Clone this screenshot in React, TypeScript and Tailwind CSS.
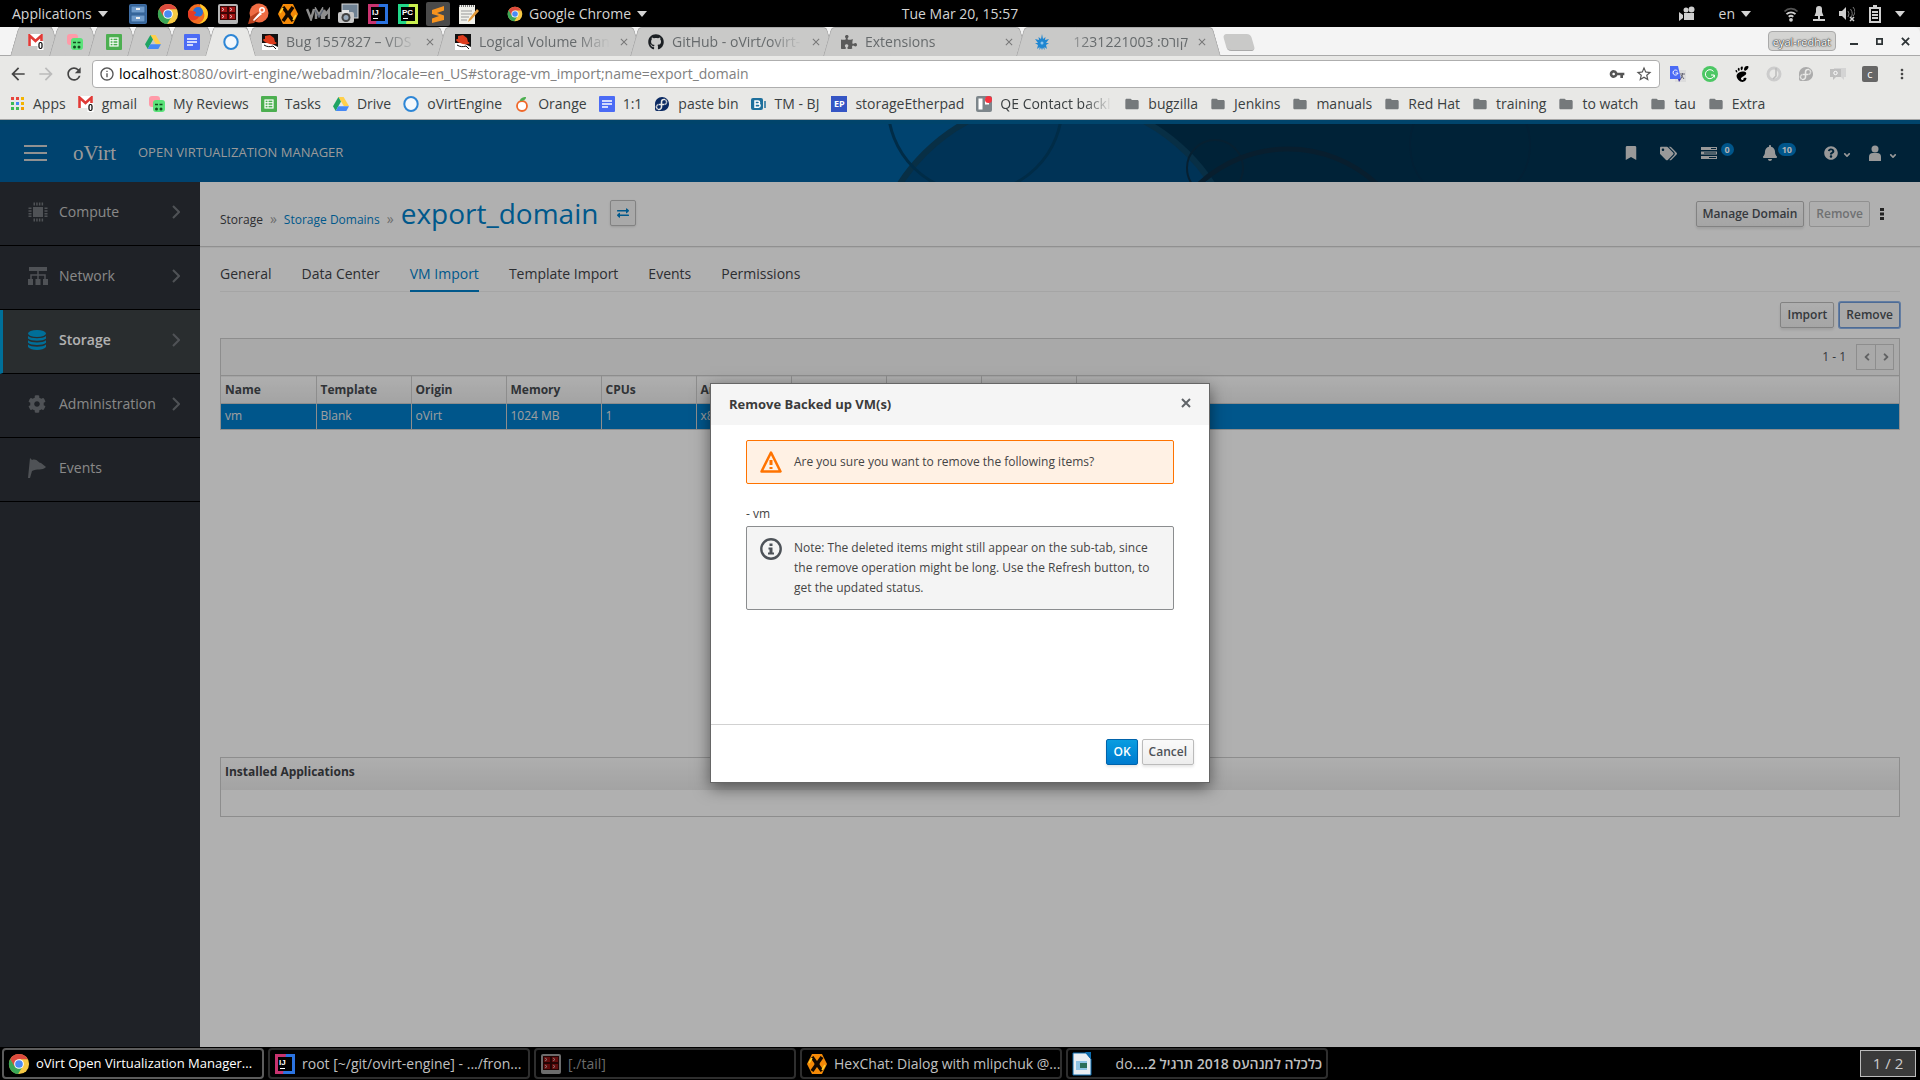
import type { ReactNode } from "react";
import {
  FaAngleDown,
  FaAngleLeft,
  FaAngleRight,
  FaBell,
  FaBookmark,
  FaCog,
  FaExchangeAlt,
  FaFedora,
  FaGithub,
  FaPuzzlePiece,
  FaQuestionCircle,
  FaTags,
} from "react-icons/fa";
import {
  MdArrowBack,
  MdArrowForward,
  MdClose,
  MdFolder,
  MdInfoOutline,
  MdMoreVert,
  MdRefresh,
  MdStarBorder,
  MdVpnKey,
} from "react-icons/md";
import { SiGnome } from "react-icons/si";

/* ---------- favicons and launcher icons ---------- */

function ChromeIcon({ className }: { className: string }) {
  return (
    <svg viewBox="0 0 24 24" className={className}>
      <circle cx="12" cy="12" r="11" fill="#f6c945" />
      <path d="M12 1a11 11 0 0 1 9.6 5.7H12L6.8 15 2.4 6.8A11 11 0 0 1 12 1z" fill="#dd4b3e" />
      <path d="M2.4 6.5A11 11 0 0 0 11 23l5-8.2L7.2 14.6z" fill="#3aa757" />
      <circle cx="12" cy="12" r="5.3" fill="#fff" />
      <circle cx="12" cy="12" r="4.2" fill="#4a8af4" />
    </svg>
  );
}

function FilesIcon() {
  return (
    <svg viewBox="0 0 20 22" className="h-[22px] w-5">
      <rect x="1" y="1" width="18" height="20" rx="2" fill="#3f6ea5" />
      <rect x="3" y="3" width="14" height="7" fill="#6f9bcb" stroke="#2f5c8f" />
      <rect x="3" y="12" width="14" height="7" fill="#6f9bcb" stroke="#2f5c8f" />
      <rect x="8" y="5" width="4" height="2" fill="#eee" />
      <rect x="8" y="14" width="4" height="2" fill="#eee" />
    </svg>
  );
}

function FirefoxIcon() {
  return (
    <svg viewBox="0 0 22 22" className="h-[22px] w-[22px]">
      <circle cx="11" cy="11" r="10" fill="#f36c21" />
      <path d="M13 1c4 2 8 5 8 10a10 10 0 0 1-10 10c6-3 8-8 5-13-1-2-3-4-3-7z" fill="#ffca28" />
      <circle cx="11" cy="9" r="5" fill="#2b6fd6" />
      <path d="M1 8c2-1 3 0 5 0s3 1 3 2-2 1-2 2 3 2 5 1c-1 4-5 5-8 4S1 12 1 8z" fill="#e63b25" />
    </svg>
  );
}

function TerminatorIcon({ className = "h-[22px] w-[22px]" }: { className?: string }) {
  return (
    <svg viewBox="0 0 22 22" className={className}>
      <rect x="1" y="1" width="20" height="20" rx="2" fill="#b5b5b5" />
      <rect x="3" y="3" width="16" height="14" fill="#3b0505" />
      <path d="M4 4h6v5H4zM12 4h6v5h-6zM4 11h6v5H4zM12 11h6v5h-6z" fill="#a31515" />
      <path d="M5 5l2 1.500-2 1.500M13 5l2 1.500-2 1.500M5 12l2 1.500-2 1.500M13 12l2 1.500-2 1.500" stroke="#fff" fill="none" strokeWidth=".7" />
    </svg>
  );
}

function PostmanIcon() {
  return (
    <svg viewBox="0 0 22 22" className="h-[22px] w-[22px]">
      <circle cx="12" cy="10" r="9.500" fill="#ef6c43" />
      <path d="M1 21l2-7 8-5 3 3-7 8z" fill="#b8401d" />
      <path d="M6 17l7-8 2 2-8 7z" fill="#fff" />
      <circle cx="15" cy="7" r="3" fill="#fff" />
      <circle cx="15" cy="7" r="1.500" fill="#ef6c43" />
    </svg>
  );
}

function HexChatIcon({ className = "h-[22px] w-[22px]" }: { className?: string }) {
  return (
    <svg viewBox="0 0 22 22" className={className}>
      <path d="M6 1h10l5 10-5 10H6L1 11z" fill="#f58a07" />
      <path d="M6 4l10 14M16 4L6 18" stroke="#120800" strokeWidth="3.500" />
      <circle cx="11" cy="11" r="2.500" fill="#120800" />
      <path d="M3 10l3-5M19 12l-3 5" stroke="#ffcf2e" strokeWidth="1.500" />
    </svg>
  );
}

function VmIcon() {
  return (
    <svg viewBox="0 0 24 14" className="h-3.5 w-6">
      <path d="M1 2l4 10 3-10M10 12V3l3 5 3-5v9M18 12V3l2 4 3-4v9" fill="none" stroke="#8d8d8d" strokeWidth="2.500" />
      <path d="M9 3l4 7 4-7" fill="none" stroke="#5c6472" strokeWidth="1.500" />
    </svg>
  );
}

function CameraIcon() {
  return (
    <svg viewBox="0 0 22 22" className="h-[22px] w-[22px]">
      <rect x="5" y="1" width="16" height="14" fill="#6f8294" stroke="#ddd" />
      <rect x="1" y="9" width="16" height="11" rx="2" fill="#c7c7c7" />
      <rect x="5" y="7" width="7" height="3" fill="#e5e5e5" />
      <circle cx="9" cy="14.500" r="4.500" fill="#444" />
      <circle cx="9" cy="14.500" r="2.500" fill="#9ab" />
    </svg>
  );
}

function JetbrainsIcon({ letters }: { letters: "IJ" | "PC" }) {
  const pc = letters === "PC";
  return (
    <svg viewBox="0 0 22 22" className="h-[22px] w-[22px]">
      <path d="M1 1h20v20H1z" fill={pc ? "#21d789" : "#c9336f"} />
      <path d="M12 1h9v20H9z" fill={pc ? "#c9ef4f" : "#2b73e0"} />
      <rect x="4" y="4" width="14" height="14" fill="#000" />
      <text x="5" y="12" fill="#fff" fontSize="8" fontWeight="700" fontFamily="Liberation Sans, sans-serif">
        {letters}
      </text>
      <path d="M6 15.500h5" stroke="#fff" />
    </svg>
  );
}

function SublimeIcon() {
  return (
    <svg viewBox="0 0 24 24" className="h-6 w-6">
      <rect width="24" height="24" rx="2" fill="#4a4a4a" />
      <path d="M6 8l12-4v4.500l-7 2.500 7 2.500V18L6 21v-4.500l7-2.500-7-2z" fill="#f7931e" />
    </svg>
  );
}

function NotesIcon() {
  return (
    <svg viewBox="0 0 22 22" className="h-[22px] w-[22px]">
      <rect x="2" y="2" width="16" height="19" fill="#f0f0ea" />
      <path d="M2 3h16" stroke="#777" strokeWidth="2" strokeDasharray="1 1" />
      <path d="M4 8h11M4 11h11M4 14h8M4 17h6" stroke="#999" />
      <path d="M20 6l-8 10-1 3 3-2 8-9z" fill="#e59b3c" />
    </svg>
  );
}

function GmailIcon() {
  return (
    <svg viewBox="0 0 16 16" className="h-4 w-4">
      <rect y="0" width="15" height="12" fill="#fff" />
      <path d="M1.500 12V1.500L7.500 7l6-5.500V12" fill="none" stroke="#e03a36" strokeWidth="2.600" />
      <rect x="9.500" y="7" width="6" height="9" fill="#fff" />
      <rect x="11" y="8.500" width="3" height="6" rx="1.500" fill="none" stroke="#000" strokeWidth="1.200" />
    </svg>
  );
}

function GerritIcon() {
  return (
    <svg viewBox="0 0 16 16" className="h-4 w-4">
      <rect width="11" height="11" rx="3" fill="#ff9aa8" />
      <rect x="4" y="4" width="12" height="12" rx="3" fill="#5be37a" />
      <path d="M6 8.500h3M10.500 8.500h3" stroke="#124d1f" strokeWidth="1.500" />
      <circle cx="7.500" cy="13" r="1.500" fill="#124d1f" />
      <circle cx="12" cy="13" r="1.500" fill="#124d1f" />
    </svg>
  );
}

function SheetsIcon() {
  return (
    <svg viewBox="0 0 16 16" className="h-4 w-4">
      <rect width="16" height="16" rx="1" fill="#4caf50" />
      <rect x="4" y="4" width="8" height="8" fill="none" stroke="#fff" strokeWidth="1.200" />
      <path d="M4 6.700h8M4 9.300h8M7 4v8" stroke="#fff" />
    </svg>
  );
}

function DriveIcon() {
  return (
    <svg viewBox="0 0 16 16" className="h-4 w-4">
      <path d="M5.400 1h5.200L16 10h-5.200z" fill="#ffd04b" />
      <path d="M5.400 1L8 5.500 2.700 15 0 10.300z" fill="#1fa463" />
      <path d="M5.300 10.300H16L13.300 15H2.700z" fill="#4688f4" />
    </svg>
  );
}

function DocsIcon() {
  return (
    <svg viewBox="0 0 16 16" className="h-4 w-4">
      <rect width="16" height="16" rx="1" fill="#4b6bf5" />
      <path d="M3 5h10M3 8h10M3 11h6" stroke="#fff" strokeWidth="1.500" />
    </svg>
  );
}

function OvirtIcon() {
  return (
    <svg viewBox="0 0 16 16" className="h-4 w-4">
      <ellipse cx="8" cy="8" rx="6.700" ry="7" fill="#f4f8fc" stroke="#2d86d6" strokeWidth="2" />
    </svg>
  );
}

function RedHatIcon() {
  return (
    <svg viewBox="0 0 16 16" className="h-4 w-4">
      <rect width="16" height="16" fill="#fff" />
      <path d="M0 0h16v13L8 9 0 9z" fill="#111" />
      <path d="M3 2l5-1 4 3 1 4c2 0 2 2 0 2-4 1-10-1-12-4 0-1 1-1 2-1z" fill="#dd3b1c" />
      <path d="M2 11c3 2 6 2 9 1l3 3" fill="none" stroke="#111" />
    </svg>
  );
}

function EmblemIcon() {
  return (
    <svg viewBox="0 0 16 16" className="h-4 w-4">
      <path
        d="M8 0l1 5 2.500-2L11 6l4-1-3 4h3l-3 2 1 4-2.500-2v3L9 13.500 8 16l-1-2.500L5.500 16v-3L3 15l1-4-3-2h3L1 5l4 1-.5-3L7 5z"
        fill="#1f86d1"
      />
      <circle cx="8" cy="9" r="1.500" fill="#8cc4ec" />
    </svg>
  );
}

function AppsIcon() {
  const colours = ["#e8453c", "#e8453c", "#f4b400", "#3cba54", "#4688f4", "#f4b400", "#3cba54", "#3cba54", "#f4a000"];
  return (
    <svg viewBox="0 0 14 14" className="h-3.5 w-3.5">
      {colours.map((fill, i) => (
        <rect key={i} x={(i % 3) * 5} y={Math.floor(i / 3) * 5} width="3" height="3" fill={fill} />
      ))}
    </svg>
  );
}

function OrangeIcon() {
  return (
    <svg viewBox="0 0 16 16" className="h-4 w-4">
      <circle cx="8" cy="10" r="5" fill="#fff" stroke="#f0682a" strokeWidth="1.800" />
      <path d="M6 5c0-3 3-4 6-4 0 3-3 4-6 4z" fill="#4caf50" />
    </svg>
  );
}

function BjIcon() {
  return (
    <svg viewBox="0 0 16 16" className="h-4 w-4">
      <rect x="0" y="2" width="12" height="12" rx="2" fill="#1d6f9c" />
      <path d="M4 5h3a1.500 1.500 0 0 1 0 3H4zM4 8h3.500a1.500 1.500 0 0 1 0 3.200H4z" fill="none" stroke="#fff" strokeWidth="1.500" />
      <path d="M14 5v7" stroke="#1d6f9c" strokeWidth="1.500" />
    </svg>
  );
}

function EtherpadIcon() {
  return (
    <span className="flex h-4 w-4 items-center justify-center bg-[#3555c4] text-[9px] font-bold text-white">EP</span>
  );
}

function QeIcon() {
  return (
    <svg viewBox="0 0 16 16" className="h-4 w-4">
      <rect width="16" height="16" rx="2" fill="#7d868b" />
      <path d="M2.500 2.500h4v11h-4zM9 2.500h4v6H9z" fill="#fff" />
      <circle cx="12.500" cy="3.500" r="3.500" fill="#f5333f" />
    </svg>
  );
}

function Caret() {
  return (
    <svg viewBox="0 0 10 6" className="h-1.5 w-2.5 fill-current">
      <path d="M0 0h10L5 6z" />
    </svg>
  );
}

/* ---------- desktop top bar ---------- */

function DesktopBar() {
  return (
    <header className="grid h-[27px] shrink-0 grid-cols-[1fr_auto_1fr] items-center bg-black text-[14px] font-medium text-[#d4d4d4]">
      <div className="flex items-center pl-3">
        <button className="flex w-[111px] items-center gap-1.5 whitespace-nowrap">
          Applications <Caret />
        </button>
        <div className="flex items-center [&>*]:flex [&>*]:w-[30px] [&>*]:justify-center">
          <span><FilesIcon /></span>
          <span><ChromeIcon className="h-[22px] w-[22px]" /></span>
          <span><FirefoxIcon /></span>
          <span><TerminatorIcon /></span>
          <span><PostmanIcon /></span>
          <span><HexChatIcon /></span>
          <span><VmIcon /></span>
          <span><CameraIcon /></span>
          <span><JetbrainsIcon letters="IJ" /></span>
          <span><JetbrainsIcon letters="PC" /></span>
          <span><SublimeIcon /></span>
          <span><NotesIcon /></span>
        </div>
        <button className="ml-6 flex items-center gap-1.5 whitespace-nowrap">
          <ChromeIcon className="h-4 w-4" /> Google Chrome <Caret />
        </button>
      </div>
      <time>Tue Mar 20, 15:57</time>
      <div className="flex items-center justify-end gap-3 pr-[15px]">
        <svg viewBox="0 0 16 16" className="mr-3 h-4 w-4 fill-[#cfcfcf]">
          <circle cx="7" cy="4" r="2.500" />
          <circle cx="12.500" cy="3.500" r="3" />
          <path d="M5 7h10v7H5zM0 6l4 3v3l-4 3z" />
        </svg>
        <button className="mr-5 flex items-center gap-1.5">
          en <Caret />
        </button>
        <svg viewBox="0 0 16 16" className="h-4 w-4" fill="none" stroke="#cfcfcf" strokeWidth="1.800">
          <path d="M1.500 5.500a9 9 0 0 1 13 0" opacity=".4" />
          <path d="M3.500 8.200a6.500 6.500 0 0 1 9 0M5.700 10.800a3.500 3.500 0 0 1 4.600 0" />
          <circle cx="8" cy="13.800" r="1" />
        </svg>
        <svg viewBox="0 0 16 16" className="h-4 w-4 fill-[#cfcfcf]">
          <path d="M8 0a3 3 0 0 1 3 3v3l1.500 4h-9L5 6V3a3 3 0 0 1 3-3zM7 10h2v3H7zM2 13h12v2H2z" />
        </svg>
        <svg viewBox="0 0 16 16" className="h-4 w-4 fill-[#cfcfcf]">
          <path d="M0 5h3l4-4v13l-4-4H0z" />
          <path d="M9 5q2 2.500 0 6M11.500 3q3.500 5 0 9M14 1q4 5 0 9" fill="none" stroke="#777" />
          <path d="M11 11l4 4M15 11l-4 4" stroke="#cfcfcf" strokeWidth="1.500" />
        </svg>
        <svg viewBox="0 0 12 18" className="mx-0.5 h-[18px] w-3" fill="none" stroke="#cfcfcf" strokeWidth="2">
          <path d="M1 3h10v14H1zM4 1h4M3 7h6M3 10h6M3 13h6" />
        </svg>
        <Caret />
      </div>
    </header>
  );
}

/* ---------- browser chrome ---------- */

function Tab({ icon, title, active, rtl }: { icon: ReactNode; title?: string; active?: boolean; rtl?: boolean }) {
  const fill = active ? "bg-[#e8e8e6]" : "bg-[#c9c9c8]";
  return (
    <div className={`relative -ml-3 h-[29px] ${title ? "w-[205px]" : "w-[51px]"} ${active ? "z-10" : ""}`}>
      <span className={`absolute top-0 bottom-0 left-0 w-2/3 origin-bottom -skew-x-[16deg] rounded-tl-sm border-t border-l border-[#a9a9a9] ${fill}`} />
      <span className={`absolute top-0 right-0 bottom-0 w-2/3 origin-bottom skew-x-[16deg] rounded-tr-sm border-t border-r border-[#a9a9a9] ${fill}`} />
      <div className="relative flex h-full items-center gap-2 pr-[13px] pl-[18px]">
        <span className="shrink-0">{icon}</span>
        {title && (
          <>
            <span
              dir={rtl ? "rtl" : "ltr"}
              className={`flex-1 text-[14px] whitespace-nowrap text-[#666a6c] ${
                rtl
                  ? "[mask-image:linear-gradient(to_left,black_75%,transparent)]"
                  : "[mask-image:linear-gradient(to_right,black_75%,transparent)]"
              }`}
            >
              {title}
            </span>
            <button aria-label="Close tab">
              <MdClose className="h-3 w-3 text-[#777]" />
            </button>
          </>
        )}
      </div>
    </div>
  );
}

const bookmarks: { icon: ReactNode; label: string; fade?: boolean }[] = [
  { icon: <AppsIcon />, label: "Apps" },
  { icon: <GmailIcon />, label: "gmail" },
  { icon: <GerritIcon />, label: "My Reviews" },
  { icon: <SheetsIcon />, label: "Tasks" },
  { icon: <DriveIcon />, label: "Drive" },
  { icon: <OvirtIcon />, label: "oVirtEngine" },
  { icon: <OrangeIcon />, label: "Orange" },
  { icon: <DocsIcon />, label: "1:1" },
  { icon: <FaFedora className="h-4 w-4 text-[#0b2a63]" />, label: "paste bin" },
  { icon: <BjIcon />, label: "TM - BJ" },
  { icon: <EtherpadIcon />, label: "storageEtherpad" },
  { icon: <QeIcon />, label: "QE Contact backl", fade: true },
  ...["bugzilla", "Jenkins", "manuals", "Red Hat", "training", "to watch", "tau", "Extra"].map((label) => ({
    icon: <MdFolder className="h-4 w-4 text-[#75797b]" />,
    label,
  })),
];

function Browser() {
  return (
    <div className="shrink-0 bg-[#e8e8e6]">
      <div className="flex h-[29px] items-start rounded-tr-md border-b border-[#a9a9a9] bg-[#f4f4f4] pl-[22px]">
        <Tab icon={<GmailIcon />} />
        <Tab icon={<GerritIcon />} />
        <Tab icon={<SheetsIcon />} />
        <Tab icon={<DriveIcon />} />
        <Tab icon={<DocsIcon />} />
        <Tab icon={<OvirtIcon />} active />
        <Tab icon={<RedHatIcon />} title="Bug 1557827 – VDS" />
        <Tab icon={<RedHatIcon />} title="Logical Volume Man" />
        <Tab icon={<FaGithub className="h-4 w-4 text-[#1b1f23]" />} title="GitHub - oVirt/ovirt-" />
        <Tab icon={<FaPuzzlePiece className="h-4 w-4 text-[#5a5a5a]" />} title="Extensions" />
        <Tab icon={<EmblemIcon />} title="קורס: 1231221003" rtl />
        <button
          aria-label="New tab"
          className="mt-[7px] ml-1 h-[17px] w-7 skew-x-[16deg] rounded-sm border-b border-[#aaa] bg-[#c9c9c8]"
        />
        <div className="ml-auto flex h-7 items-center gap-3.5 pr-2.5">
          <button className="h-5 rounded-sm border border-[#aaa] bg-[#d4d4d2] px-1 text-[11px] leading-none text-white [text-shadow:0_0_2px_#333,0_0_1px_#333,0_0_1px_#333]">
            eyal-redhat
          </button>
          <svg viewBox="0 0 8 10" className="h-2.5 w-2">
            <path d="M0 8h8" stroke="#2e3436" strokeWidth="2" />
          </svg>
          <svg viewBox="0 0 8 8" className="ml-1 h-[7px] w-[7px]">
            <path d="M1 1h6v6H1z" fill="none" stroke="#2e3436" strokeWidth="2" />
          </svg>
          <svg viewBox="0 0 10 10" className="ml-1 h-[9px] w-[9px]">
            <path d="M1 1l8 8M9 1L1 9" stroke="#2e3436" strokeWidth="2" />
          </svg>
        </div>
      </div>
      <div className="flex h-8 items-end">
        <div className="flex w-[92px] items-center gap-2 pb-1 pl-2 text-[#444]">
          <MdArrowBack className="h-5 w-5" />
          <MdArrowForward className="h-5 w-5 text-[#bbb]" />
          <MdRefresh className="h-5 w-5" />
        </div>
        <div className="flex h-7 flex-1 items-center gap-1 rounded-sm border border-[#aeaeae] bg-white px-1.5 text-[#555]">
          <MdInfoOutline className="h-4 w-4" />
          <p className="flex-1 pb-px text-[14px] text-[#808080]">
            <span className="text-black">localhost</span>
            :8080/ovirt-engine/webadmin/?locale=en_US#storage-vm_import;name=export_domain
          </p>
          <MdVpnKey className="h-4 w-4" />
          <MdStarBorder className="ml-1.5 h-[18px] w-[18px]" />
        </div>
        <div className="flex items-center gap-4 pr-2.5 pb-1.5 pl-2.5">
          <svg viewBox="0 0 16 16" className="h-4 w-4">
            <rect x="5" y="4" width="11" height="12" fill="#dcdcdc" />
            <path d="M0 0h8l3 13H0z" fill="#4b6bf5" />
            <path d="M7.500 5A2.500 2.500 0 1 0 8 7H5.500" fill="none" stroke="#fff" />
            <path d="M10 8h5M12.500 7v1c0 2-1 4-2 5M11 9l3 4" fill="none" stroke="#667" />
            <path d="M8 13h3l-2 3z" fill="#3b30a8" />
          </svg>
          <svg viewBox="0 0 16 16" className="h-4 w-4">
            <circle cx="8" cy="8" r="8" fill="#4cc764" />
            <path d="M11.500 5.500A4.500 4.500 0 1 0 12.300 9H9M12.300 9v2.500" fill="none" stroke="#fff" />
          </svg>
          <SiGnome className="h-4 w-4 text-black" />
          <svg viewBox="0 0 16 16" className="h-4 w-4" fill="none">
            <circle cx="8" cy="8" r="6" stroke="#ccc" strokeWidth="3" />
            <path d="M10 2v8l-3 3" stroke="#bbb" strokeWidth="1.500" />
          </svg>
          <FaFedora className="h-4 w-4 text-[#ababab]" />
          <svg viewBox="0 0 16 16" className="h-4 w-4">
            <path d="M4 2h12v9h-2v3l-3-3H4z" fill="#d4d4d4" />
            <path d="M0 3h11v8H6l-3 3v-3H0z" fill="#bfbfbf" />
            <circle cx="5.500" cy="7" r="1.700" fill="none" stroke="#fff" />
          </svg>
          <span className="flex h-4 w-4 items-center justify-center rounded-xs bg-[#666] text-[11px] text-white">c</span>
          <MdMoreVert className="h-4 w-4 text-[#444]" />
        </div>
      </div>
      <nav className="flex h-8 items-center gap-3 border-b border-[#a5a5a5] pl-[11px] text-[14px] text-[#3a3f41]">
        {bookmarks.map(({ icon, label, fade }) => (
          <a key={label} href="#" className="flex items-center gap-2 whitespace-nowrap">
            {icon}
            {fade ? (
              <span className="w-28 [mask-image:linear-gradient(to_right,black_75%,transparent)]">{label}</span>
            ) : (
              label
            )}
          </a>
        ))}
      </nav>
    </div>
  );
}

/* ---------- oVirt application ---------- */

function MastheadCircles() {
  return (
    <svg viewBox="0 0 1040 58" className="absolute right-0 bottom-0 h-[58px] w-[1040px]">
      <path d="M269 0H1040V58H332Q310 30 269 0z" fill="#003250" />
      <circle cx="176" cy="161" r="186" fill="#00497c" stroke="#0c4463" strokeWidth="6" />
      <g fill="none">
        <circle cx="95" cy="-18" r="87" stroke="#003f66" strokeWidth="3" />
        <circle cx="335" cy="44" r="28" stroke="#0a2e47" strokeWidth="2" />
        <circle cx="408" cy="155" r="130" stroke="#0c2c43" strokeWidth="5" />
        <circle cx="590" cy="21" r="60" stroke="#042f4c" strokeWidth="2" />
      </g>
    </svg>
  );
}

function Masthead() {
  return (
    <header className="relative flex h-[62px] items-center overflow-hidden border-t-4 border-[#00629a] bg-[#00609f] text-[#dcdcdc]">
      <MastheadCircles />
      <div className="relative flex flex-1 items-center pl-6">
        <button aria-label="Toggle navigation" className="flex w-[23px] flex-col gap-1">
          <span className="h-0.5 bg-[#d0d0d0]" />
          <span className="mt-px h-0.5 bg-[#d0d0d0]" />
          <span className="mt-px h-0.5 bg-[#d0d0d0]" />
        </button>
        <span className="ml-[26px] w-[65px] font-['Liberation_Serif',serif] text-[21px] leading-none">oVirt</span>
        <span className="text-[13px]">OPEN VIRTUALIZATION MANAGER</span>
      </div>
      <div className="relative flex items-center pr-[22px]">
        <FaBookmark className="mr-[22px] h-3.5 w-3.5" />
        <FaTags className="mr-6 h-[17px] w-[17px]" />
        <svg viewBox="0 0 16 14" className="h-3.5 w-4 fill-current">
          <path d="M0 1h16v3H0zM0 5.500h16v3H0zM0 10h16v3H0z" />
          <path d="M10 2.500h5M3 7h12M8 11.500h7" stroke="#003250" />
        </svg>
        <span className="mr-7 mb-2 ml-1 rounded-full bg-[#007bc8] px-1 text-[9px] leading-[13px] font-bold text-white">0</span>
        <FaBell className="h-4 w-4" />
        <span className="mr-7 mb-2 rounded-full bg-[#007bc8] px-1 text-[9px] leading-[13px] font-bold text-white">10</span>
        <FaQuestionCircle className="h-3.5 w-3.5" />
        <FaAngleDown className="mt-1 mr-4 ml-1 h-2.5 w-2.5" />
        <svg viewBox="0 0 14 16" className="h-4 w-3.5 fill-current">
          <circle cx="7" cy="4" r="3.500" />
          <path d="M1 16v-4a4 4 0 0 1 4-4h4a4 4 0 0 1 4 4v4z" />
        </svg>
        <FaAngleDown className="mt-1.5 ml-1.5 h-2.5 w-2.5" />
      </div>
    </header>
  );
}

function ComputeIcon() {
  return (
    <svg viewBox="0 0 20 20" className="h-5 w-5">
      <rect x="5" y="5" width="10" height="10" fill="currentColor" />
      <path d="M5.500 2h10M5.500 18h10" stroke="currentColor" strokeWidth="3" strokeDasharray="1.500 1.200" />
      <path d="M2 5.500v10M18 5.500v10" stroke="currentColor" strokeWidth="3" strokeDasharray="1.500 1.200" />
    </svg>
  );
}

function NetworkIcon() {
  return (
    <svg viewBox="0 0 20 18" className="h-[18px] w-5 fill-current">
      <path d="M1 0h18v4H1zM0 12h5v6H0zM7.500 12h5v6h-5zM15 12h5v6h-5z" />
      <path d="M10 4v8M3 12V8h14v4" fill="none" stroke="currentColor" strokeWidth="1.500" />
    </svg>
  );
}

function StorageIcon() {
  return (
    <svg viewBox="0 0 18 20" className="h-5 w-[18px] fill-current">
      <ellipse cx="9" cy="3.500" rx="9" ry="3.500" />
      <path d="M0 6c3 3 15 3 18 0v2.500c-3 3-15 3-18 0zM0 10.300c3 3 15 3 18 0v2.500c-3 3-15 3-18 0zM0 14.600c3 3 15 3 18 0V17c-3 4-15 4-18 0z" />
    </svg>
  );
}

function FlagIcon() {
  return (
    <svg viewBox="0 0 18 20" className="h-5 w-[18px] fill-current">
      <path d="M2 0l2 2c5-2 6 3 9 3l5 4c-4 4-9 1-14 4l-2 7H0z" />
    </svg>
  );
}

const sections = [
  { label: "Compute", icon: <ComputeIcon />, expands: true },
  { label: "Network", icon: <NetworkIcon />, expands: true },
  { label: "Storage", icon: <StorageIcon />, expands: true, active: true },
  { label: "Administration", icon: <FaCog className="h-[18px] w-[18px]" />, expands: true },
  { label: "Events", icon: <FlagIcon />, expands: false },
];

function Sidebar() {
  return (
    <nav className="w-[200px] shrink-0 bg-[#2d3238] text-[14px]">
      {sections.map(({ label, icon, expands, active }) => (
        <a
          key={label}
          href="#"
          className={`flex h-16 items-center border-b border-black pr-5 pb-1 ${
            active ? "border-l-[3px] border-l-[#00a0dc] bg-[#3c4144] pl-[25px] font-semibold text-white" : "pl-7 text-[#c4c4c4]"
          }`}
        >
          <span className={`flex w-[31px] shrink-0 ${active ? "text-[#00a0dc]" : "text-[#72767b]"}`}>{icon}</span>
          <span className="flex-1">{label}</span>
          {expands && (
            <svg viewBox="0 0 8 14" className="h-3.5 w-2" fill="none" stroke="#72767b" strokeWidth="2">
              <path d="M1 1l6 6-6 6" />
            </svg>
          )}
        </a>
      ))}
    </nav>
  );
}

const plainButton =
  "h-[26px] rounded-xs border border-[#bbb] bg-linear-to-b from-[#fafafa] to-[#ededed] px-1.5 text-[12px] font-semibold text-[#4d5258] shadow-[0_2px_3px_rgba(3,3,3,0.1)]";

const tabs = ["General", "Data Center", "VM Import", "Template Import", "Events", "Permissions"];

const columns = [
  { title: "Name", value: "vm" },
  { title: "Template", value: "Blank" },
  { title: "Origin", value: "oVirt" },
  { title: "Memory", value: "1024 MB" },
  { title: "CPUs", value: "1" },
  { title: "Architecture", value: "x86_64" },
  { title: "", value: "" },
  { title: "", value: "" },
  { title: "", value: "" },
];

function VmTable() {
  return (
    <div className="border border-[#cacaca]">
      <div className="flex h-9 items-center justify-end gap-2.5 bg-[#f3f3f3] pr-[5px] text-[12px] text-[#4d5258]">
        <span>1 - 1</span>
        <div className="flex h-[26px] text-[#8b8d8f]">
          <button aria-label="Previous page" className="w-5 border border-[#cacaca] pl-1">
            <FaAngleLeft />
          </button>
          <button aria-label="Next page" className="w-[18px] border border-l-0 border-[#cacaca] pl-1">
            <FaAngleRight />
          </button>
        </div>
      </div>
      <table className="w-full table-fixed border-collapse text-left text-[12px]">
        <thead>
          <tr className="h-7 border-t border-[#cacaca] bg-linear-to-b from-[#fafafa] to-[#eaeaea] text-[#45494e]">
            {columns.map(({ title }, i) => (
              <th key={i} className="w-[95px] border-r border-b border-[#cacaca] px-1 font-bold">
                {title}
              </th>
            ))}
            <th className="border-b border-[#cacaca]" />
          </tr>
        </thead>
        <tbody>
          <tr className="h-[25px] bg-[#007bc8] text-[#e4e4e4]">
            {columns.map(({ value }, i) => (
              <td key={i} className="border-r border-[#cacaca] px-1">
                {value}
              </td>
            ))}
            <td />
          </tr>
        </tbody>
      </table>
    </div>
  );
}

function DomainPage() {
  return (
    <main className="flex min-w-0 flex-1 flex-col bg-[#fdfdfd] text-[#3f4247]">
      <div className="flex h-[65px] items-start border-b border-[#cfcfcf] px-5 pt-[11px] shadow-[0_1px_0_#efefef]">
        <div className="flex h-10 flex-1 items-baseline text-[12px]">
          <span>Storage</span>
          <span className="px-[7px] text-[14px] text-[#9c9c9c]">»</span>
          <a href="#" className="text-[#007fc8]">
            Storage Domains
          </a>
          <span className="px-[7px] text-[14px] text-[#9c9c9c]">»</span>
          <h1 className="text-[28px] leading-10 text-[#007fc8]">export_domain</h1>
          <button
            aria-label="Switch domain"
            className="ml-3 flex h-[26px] w-[26px] items-center justify-center self-center rounded-xs border border-[#bbb] bg-[#f3f3f3] text-[#007fc8] shadow-sm"
          >
            <FaExchangeAlt className="h-3 w-3" />
          </button>
        </div>
        <div className="mt-2 flex items-center gap-[5px]">
          <button className={plainButton}>Manage Domain</button>
          <button className="h-[26px] rounded-xs border border-[#cfcfcf] bg-[#fafafa] px-1.5 text-[12px] font-semibold text-[#a0a2a4]">
            Remove
          </button>
          <button aria-label="More actions" className="pr-4 pl-[5px]">
            <svg viewBox="0 0 4 14" className="h-3.5 w-1 fill-[#333]">
              <path d="M0 1h4v3H0zM0 5.500h4v3H0zM0 10h4v3H0z" />
            </svg>
          </button>
        </div>
      </div>
      <div className="px-5">
        <nav className="mt-[13px] flex h-8 gap-[30px] border-b border-[#ececec] text-[14px]">
          {tabs.map((tab) => (
            <a
              key={tab}
              href="#"
              className={`h-8 leading-7 ${tab === "VM Import" ? "border-b-2 border-[#007fc8] text-[#007fc8]" : ""}`}
            >
              {tab}
            </a>
          ))}
        </nav>
        <div className="flex justify-end gap-[5px] py-2.5">
          <button className={plainButton}>Import</button>
          <button className="h-[26px] rounded-xs border border-[#6f9ad6] bg-[#f3f3f3] px-1.5 text-[12px] font-semibold text-[#4d5258] shadow-[0_0_0_1px_#8fb4e8]">
            Remove
          </button>
        </div>
        <VmTable />
        <section className="mt-[327px] border border-[#cacaca] text-[12px]">
          <h2 className="h-8 bg-linear-to-b from-[#fafafa] to-[#eaeaea] px-1 leading-7 font-bold">
            Installed Applications
          </h2>
          <div className="h-[26px]" />
        </section>
      </div>
    </main>
  );
}

function RemoveDialog() {
  return (
    <div className="absolute inset-0 z-20 flex items-start justify-center bg-black/30 pt-[263px]">
      <div
        role="dialog"
        aria-labelledby="dialog-title"
        className="flex h-[400px] w-[500px] flex-col border border-[#666] bg-white text-[12px] text-[#444] shadow-[0_5px_15px_rgba(0,0,0,0.5)]"
      >
        <div className="flex h-[41px] shrink-0 items-center justify-between bg-[#f5f5f5] pr-[17px] pl-[18px]">
          <h2 id="dialog-title" className="text-[13px] font-bold text-[#3b3b3b]">
            Remove Backed up VM(s)
          </h2>
          <button aria-label="Close" className="mb-1">
            <svg viewBox="0 0 12 12" className="h-3 w-3" stroke="#606468" strokeWidth="2">
              <path d="M2 2l8 8M10 2l-8 8" />
            </svg>
          </button>
        </div>
        <div className="flex-1 px-[35px] pt-[15px]">
          <div className="flex h-11 items-center gap-3 rounded-xs border border-[#ff7300] bg-[#fff1e4] px-[13px]">
            <svg viewBox="0 0 22 22" className="h-[22px] w-[22px]">
              <path d="M11 1.500l9.500 19h-19z" fill="none" stroke="#ff7300" strokeWidth="2.500" strokeLinejoin="round" />
              <path d="M11 9v5M11 16v2" stroke="#ff7300" strokeWidth="3" />
            </svg>
            <p>Are you sure you want to remove the following items?</p>
          </div>
          <p className="mt-5 mb-0.5 leading-5">- vm</p>
          <div className="flex gap-3 rounded-xs border border-[#8b8d8f] bg-[#f4f4f4] px-[13px] py-[11px]">
            <svg viewBox="0 0 22 22" className="h-[22px] w-[22px] shrink-0">
              <circle cx="11" cy="11" r="9.700" fill="none" stroke="#4d5258" strokeWidth="2.400" />
              <path d="M9.500 5.500h3v2.500h-3zM8.500 9.500h4v5h1.500v2H8v-2h1.500v-3h-1z" fill="#4d5258" />
            </svg>
            <p className="leading-5">
              Note: The deleted items might still appear on the sub-tab, since the remove operation might be long. Use
              the Refresh button, to get the updated status.
            </p>
          </div>
        </div>
        <div className="flex h-[58px] shrink-0 justify-end gap-1 border-t border-[#d1d1d1] px-[15px] pt-3.5">
          <button className="h-[26px] rounded-xs border border-[#0063ab] bg-linear-to-b from-[#0a9de0] to-[#007bcf] px-1.5 font-semibold text-white shadow-[0_2px_3px_rgba(3,3,3,0.1)]">
            OK
          </button>
          <button className={plainButton}>Cancel</button>
        </div>
      </div>
    </div>
  );
}

/* ---------- window list ---------- */

const windows = [
  {
    icon: <ChromeIcon className="h-[22px] w-[22px]" />,
    title: "oVirt Open Virtualization Manager...",
    tone: "border-[#5c5c5c] text-[13px] font-medium text-white",
  },
  { icon: <JetbrainsIcon letters="IJ" />, title: "root [~/git/ovirt-engine] - .../fron...", tone: "border-[#2e2e2e] text-[#c0c0c0]" },
  { icon: <TerminatorIcon className="h-[22px] w-[22px] opacity-60" />, title: "[./tail]", tone: "border-[#2e2e2e] text-[#6c6c6c]" },
  { icon: <HexChatIcon />, title: "HexChat: Dialog with mlipchuk @...", tone: "border-[#2e2e2e] text-[#c0c0c0]" },
];

function WindowList() {
  return (
    <footer className="flex h-[33px] shrink-0 items-center gap-1 bg-black px-0.5 text-[14px]">
      {windows.map(({ icon, title, tone }) => (
        <button
          key={title}
          className={`flex h-[31px] w-[262px] items-center gap-1.5 rounded-sm border-2 pl-1 whitespace-nowrap ${tone}`}
        >
          <span className="shrink-0">{icon}</span>
          {title}
        </button>
      ))}
      <button className="flex h-[31px] w-[262px] items-center gap-1.5 rounded-sm border-2 border-[#2e2e2e] px-1 whitespace-nowrap text-[#c0c0c0]">
        <svg viewBox="0 0 20 24" className="h-6 w-5 shrink-0">
          <path d="M1 1h13l5 6v16H1z" fill="#e9eef2" stroke="#0d6cae" />
          <path d="M13 0h6v7z" fill="#0d6cae" />
          <rect x="4" y="9" width="11" height="9" fill="#8fc3e3" />
          <rect x="8" y="11" width="7" height="5" fill="#2c6e58" />
        </svg>
        <span dir="rtl" className="flex-1 text-right font-semibold">
          כלכלה למנהעס 2018 תרגיל 2....<span className="font-normal">do</span>
        </span>
      </button>
      <span className="mr-0.5 ml-auto flex h-[27px] w-14 items-center justify-center border border-[#bbb] bg-[#3a3a3a] text-[15px] text-[#ccc]">
        1 / 2
      </span>
    </footer>
  );
}

export default function App() {
  return (
    <div className="flex min-h-screen flex-col font-['Open_Sans','Noto_Sans',sans-serif]">
      <DesktopBar />
      <Browser />
      <div className="relative flex flex-1 flex-col">
        <Masthead />
        <div className="flex flex-1">
          <Sidebar />
          <DomainPage />
        </div>
        <RemoveDialog />
      </div>
      <WindowList />
    </div>
  );
}
